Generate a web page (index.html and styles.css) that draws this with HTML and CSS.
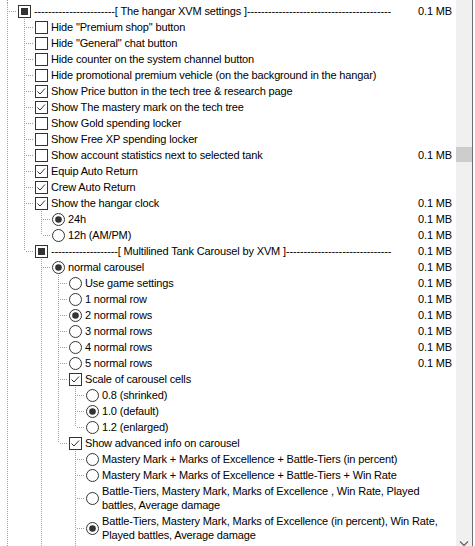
FILE: index.html
```html
<!DOCTYPE html>
<html>
<head>
<meta charset="utf-8">
<link rel="stylesheet" href="styles.css">
</head>
<body>
<div class="window">
  <div class="tree">
    <div class="row stub"><span class="c pipe"></span></div>

    <div class="row"><span class="c tee"></span>
      <svg class="ctl" viewBox="0 0 13 13"><rect x="0.5" y="0.5" width="12" height="12" fill="#fff" stroke="#333"/><rect x="3" y="3" width="7" height="7" fill="#333"/></svg>
      <span class="label">-----------------------[ The hangar XVM settings ]-----------------------------------------</span><span class="size">0.1 MB</span></div>

    <div class="row"><span class="c pipe"></span><span class="c tee"></span>
      <svg class="ctl" viewBox="0 0 13 13"><rect x="0.5" y="0.5" width="12" height="12" fill="#fff" stroke="#333"/></svg>
      <span class="label">Hide "Premium shop" button</span></div>
    <div class="row"><span class="c pipe"></span><span class="c tee"></span>
      <svg class="ctl" viewBox="0 0 13 13"><rect x="0.5" y="0.5" width="12" height="12" fill="#fff" stroke="#333"/></svg>
      <span class="label">Hide "General" chat button</span></div>
    <div class="row"><span class="c pipe"></span><span class="c tee"></span>
      <svg class="ctl" viewBox="0 0 13 13"><rect x="0.5" y="0.5" width="12" height="12" fill="#fff" stroke="#333"/></svg>
      <span class="label">Hide counter on the system channel button</span></div>
    <div class="row"><span class="c pipe"></span><span class="c tee"></span>
      <svg class="ctl" viewBox="0 0 13 13"><rect x="0.5" y="0.5" width="12" height="12" fill="#fff" stroke="#333"/></svg>
      <span class="label">Hide promotional premium vehicle (on the background in the hangar)</span></div>
    <div class="row"><span class="c pipe"></span><span class="c tee"></span>
      <svg class="ctl" viewBox="0 0 13 13"><rect x="0.5" y="0.5" width="12" height="12" fill="#fff" stroke="#333"/><path d="M2.5 6.5 L5 9 L10 3.5" fill="none" stroke="#333"/></svg>
      <span class="label">Show Price button in the tech tree &amp; research page</span></div>
    <div class="row"><span class="c pipe"></span><span class="c tee"></span>
      <svg class="ctl" viewBox="0 0 13 13"><rect x="0.5" y="0.5" width="12" height="12" fill="#fff" stroke="#333"/><path d="M2.5 6.5 L5 9 L10 3.5" fill="none" stroke="#333"/></svg>
      <span class="label">Show The mastery mark on the tech tree</span></div>
    <div class="row"><span class="c pipe"></span><span class="c tee"></span>
      <svg class="ctl" viewBox="0 0 13 13"><rect x="0.5" y="0.5" width="12" height="12" fill="#fff" stroke="#333"/></svg>
      <span class="label">Show Gold spending locker</span></div>
    <div class="row"><span class="c pipe"></span><span class="c tee"></span>
      <svg class="ctl" viewBox="0 0 13 13"><rect x="0.5" y="0.5" width="12" height="12" fill="#fff" stroke="#333"/></svg>
      <span class="label">Show Free XP spending locker</span></div>
    <div class="row"><span class="c pipe"></span><span class="c tee"></span>
      <svg class="ctl" viewBox="0 0 13 13"><rect x="0.5" y="0.5" width="12" height="12" fill="#fff" stroke="#333"/></svg>
      <span class="label">Show account statistics next to selected tank</span><span class="size">0.1 MB</span></div>
    <div class="row"><span class="c pipe"></span><span class="c tee"></span>
      <svg class="ctl" viewBox="0 0 13 13"><rect x="0.5" y="0.5" width="12" height="12" fill="#fff" stroke="#333"/><path d="M2.5 6.5 L5 9 L10 3.5" fill="none" stroke="#333"/></svg>
      <span class="label">Equip Auto Return</span></div>
    <div class="row"><span class="c pipe"></span><span class="c tee"></span>
      <svg class="ctl" viewBox="0 0 13 13"><rect x="0.5" y="0.5" width="12" height="12" fill="#fff" stroke="#333"/><path d="M2.5 6.5 L5 9 L10 3.5" fill="none" stroke="#333"/></svg>
      <span class="label">Crew Auto Return</span></div>
    <div class="row"><span class="c pipe"></span><span class="c tee"></span>
      <svg class="ctl" viewBox="0 0 13 13"><rect x="0.5" y="0.5" width="12" height="12" fill="#fff" stroke="#333"/><path d="M2.5 6.5 L5 9 L10 3.5" fill="none" stroke="#333"/></svg>
      <span class="label">Show the hangar clock</span><span class="size">0.1 MB</span></div>
    <div class="row"><span class="c pipe"></span><span class="c pipe"></span><span class="c tee"></span>
      <svg class="ctl" viewBox="0 0 13 13"><circle cx="6.5" cy="6.5" r="6" fill="#fff" stroke="#333"/><circle cx="6.5" cy="6.5" r="3.3" fill="#333"/></svg>
      <span class="label">24h</span><span class="size">0.1 MB</span></div>
    <div class="row"><span class="c pipe"></span><span class="c pipe"></span><span class="c ell"></span>
      <svg class="ctl" viewBox="0 0 13 13"><circle cx="6.5" cy="6.5" r="6" fill="#fff" stroke="#333"/></svg>
      <span class="label">12h (AM/PM)</span><span class="size">0.1 MB</span></div>

    <div class="row"><span class="c pipe"></span><span class="c ell"></span>
      <svg class="ctl" viewBox="0 0 13 13"><rect x="0.5" y="0.5" width="12" height="12" fill="#fff" stroke="#333"/><rect x="3" y="3" width="7" height="7" fill="#333"/></svg>
      <span class="label">-------------------[ Multilined Tank Carousel by XVM ]------------------------------</span><span class="size">0.1 MB</span></div>

    <div class="row"><span class="c pipe"></span><span class="c"></span><span class="c tee"></span>
      <svg class="ctl" viewBox="0 0 13 13"><circle cx="6.5" cy="6.5" r="6" fill="#fff" stroke="#333"/><circle cx="6.5" cy="6.5" r="3.3" fill="#333"/></svg>
      <span class="label">normal carousel</span><span class="size">0.1 MB</span></div>

    <div class="row"><span class="c pipe"></span><span class="c"></span><span class="c pipe"></span><span class="c tee"></span>
      <svg class="ctl" viewBox="0 0 13 13"><circle cx="6.5" cy="6.5" r="6" fill="#fff" stroke="#333"/></svg>
      <span class="label">Use game settings</span><span class="size">0.1 MB</span></div>
    <div class="row"><span class="c pipe"></span><span class="c"></span><span class="c pipe"></span><span class="c tee"></span>
      <svg class="ctl" viewBox="0 0 13 13"><circle cx="6.5" cy="6.5" r="6" fill="#fff" stroke="#333"/></svg>
      <span class="label">1 normal row</span><span class="size">0.1 MB</span></div>
    <div class="row"><span class="c pipe"></span><span class="c"></span><span class="c pipe"></span><span class="c tee"></span>
      <svg class="ctl" viewBox="0 0 13 13"><circle cx="6.5" cy="6.5" r="6" fill="#fff" stroke="#333"/><circle cx="6.5" cy="6.5" r="3.3" fill="#333"/></svg>
      <span class="label">2 normal rows</span><span class="size">0.1 MB</span></div>
    <div class="row"><span class="c pipe"></span><span class="c"></span><span class="c pipe"></span><span class="c tee"></span>
      <svg class="ctl" viewBox="0 0 13 13"><circle cx="6.5" cy="6.5" r="6" fill="#fff" stroke="#333"/></svg>
      <span class="label">3 normal rows</span><span class="size">0.1 MB</span></div>
    <div class="row"><span class="c pipe"></span><span class="c"></span><span class="c pipe"></span><span class="c tee"></span>
      <svg class="ctl" viewBox="0 0 13 13"><circle cx="6.5" cy="6.5" r="6" fill="#fff" stroke="#333"/></svg>
      <span class="label">4 normal rows</span><span class="size">0.1 MB</span></div>
    <div class="row"><span class="c pipe"></span><span class="c"></span><span class="c pipe"></span><span class="c tee"></span>
      <svg class="ctl" viewBox="0 0 13 13"><circle cx="6.5" cy="6.5" r="6" fill="#fff" stroke="#333"/></svg>
      <span class="label">5 normal rows</span><span class="size">0.1 MB</span></div>
    <div class="row"><span class="c pipe"></span><span class="c"></span><span class="c pipe"></span><span class="c tee"></span>
      <svg class="ctl" viewBox="0 0 13 13"><rect x="0.5" y="0.5" width="12" height="12" fill="#fff" stroke="#333"/><path d="M2.5 6.5 L5 9 L10 3.5" fill="none" stroke="#333"/></svg>
      <span class="label">Scale of carousel cells</span></div>
    <div class="row"><span class="c pipe"></span><span class="c"></span><span class="c pipe"></span><span class="c pipe"></span><span class="c tee"></span>
      <svg class="ctl" viewBox="0 0 13 13"><circle cx="6.5" cy="6.5" r="6" fill="#fff" stroke="#333"/></svg>
      <span class="label">0.8 (shrinked)</span></div>
    <div class="row"><span class="c pipe"></span><span class="c"></span><span class="c pipe"></span><span class="c pipe"></span><span class="c tee"></span>
      <svg class="ctl" viewBox="0 0 13 13"><circle cx="6.5" cy="6.5" r="6" fill="#fff" stroke="#333"/><circle cx="6.5" cy="6.5" r="3.3" fill="#333"/></svg>
      <span class="label">1.0 (default)</span></div>
    <div class="row"><span class="c pipe"></span><span class="c"></span><span class="c pipe"></span><span class="c pipe"></span><span class="c ell"></span>
      <svg class="ctl" viewBox="0 0 13 13"><circle cx="6.5" cy="6.5" r="6" fill="#fff" stroke="#333"/></svg>
      <span class="label">1.2 (enlarged)</span></div>
    <div class="row"><span class="c pipe"></span><span class="c"></span><span class="c pipe"></span><span class="c ell"></span>
      <svg class="ctl" viewBox="0 0 13 13"><rect x="0.5" y="0.5" width="12" height="12" fill="#fff" stroke="#333"/><path d="M2.5 6.5 L5 9 L10 3.5" fill="none" stroke="#333"/></svg>
      <span class="label">Show advanced info on carousel</span></div>
    <div class="row"><span class="c pipe"></span><span class="c"></span><span class="c pipe"></span><span class="c"></span><span class="c tee"></span>
      <svg class="ctl" viewBox="0 0 13 13"><circle cx="6.5" cy="6.5" r="6" fill="#fff" stroke="#333"/></svg>
      <span class="label">Mastery Mark + Marks of Excellence + Battle-Tiers (in percent)</span></div>
    <div class="row"><span class="c pipe"></span><span class="c"></span><span class="c pipe"></span><span class="c"></span><span class="c tee"></span>
      <svg class="ctl" viewBox="0 0 13 13"><circle cx="6.5" cy="6.5" r="6" fill="#fff" stroke="#333"/></svg>
      <span class="label">Mastery Mark + Marks of Excellence + Battle-Tiers + Win Rate</span></div>
    <div class="row tall"><span class="c pipe"></span><span class="c"></span><span class="c pipe"></span><span class="c"></span><span class="c tee"></span>
      <svg class="ctl" viewBox="0 0 13 13"><circle cx="6.5" cy="6.5" r="6" fill="#fff" stroke="#333"/></svg>
      <span class="label">Battle-Tiers, Mastery Mark, Marks of Excellence , Win Rate, Played<br>battles, Average damage</span></div>
    <div class="row tall"><span class="c pipe"></span><span class="c"></span><span class="c pipe"></span><span class="c"></span><span class="c tee"></span>
      <svg class="ctl" viewBox="0 0 13 13"><circle cx="6.5" cy="6.5" r="6" fill="#fff" stroke="#333"/><circle cx="6.5" cy="6.5" r="3.3" fill="#333"/></svg>
      <span class="label">Battle-Tiers, Mastery Mark, Marks of Excellence (in percent), Win Rate,<br>Played battles, Average damage</span></div>
    <div class="row"><span class="c pipe"></span><span class="c"></span><span class="c pipe"></span><span class="c"></span><span class="c pipe"></span></div>
  </div>
  <div class="scrollbar">
    <div class="thumb"></div>
    <div class="track-rest"></div>
    <svg class="arrow" viewBox="0 0 16 5"><path d="M4 0.5 L8 4.5 L12 0.5" fill="none" stroke="#606060" stroke-width="1.2"/></svg>
  </div>
  <div class="edge"></div>
  <div class="margin"></div>
</div>
</body>
</html>
```

FILE: styles.css
```css
* { box-sizing: border-box; }
html, body { margin: 0; padding: 0; background: #fff; overflow: hidden; }
body {
  width: 475px;
  height: 546px;
  font-family: "Liberation Sans", Arial, sans-serif;
  font-size: 11px;
  letter-spacing: -0.15px;
  color: #000;
}
.window { display: flex; height: 546px; }
.tree { flex: 1; min-width: 0; overflow: hidden; }
.row {
  display: flex;
  align-items: stretch;
  min-height: 16px;
  line-height: 16px;
  padding-right: 4px;
  --mid: 8px;
}
.row.stub { min-height: 3px; height: 3px; }
.row.tall { --mid: 15px; padding: 1px 4px 1px 0; }
.row.tall .label { line-height: 14px; }
.c { flex: none; width: 17px; background-repeat: no-repeat; }
.pipe {
  background-image: repeating-linear-gradient(to bottom, #a0a0a0 0 1px, transparent 1px 2px);
  background-size: 1px 100%;
  background-position: 7px 0;
}
.tee, .ell {
  background-image:
    repeating-linear-gradient(to bottom, #a0a0a0 0 1px, transparent 1px 2px),
    repeating-linear-gradient(to right, #a0a0a0 0 1px, transparent 1px 2px);
  background-position: 7px 0, 9px var(--mid);
}
.tee { background-size: 1px 100%, 8px 1px; }
.ell { background-size: 1px var(--mid), 8px 1px; }
.row.tall .c { margin: -1px 0; }
.ctl {
  flex: none;
  width: 13px;
  height: 13px;
  margin: 1px 0 0 1px;
  align-self: center;
  display: block;
}
.label { flex: 1; min-width: 0; white-space: nowrap; margin-left: 3px; }
.size { flex: none; text-align: right; white-space: nowrap; }
.scrollbar {
  flex: none;
  width: 16px;
  background: #f0f0f0;
  display: flex;
  flex-direction: column;
}
.thumb { height: 15px; margin-top: 147px; background: #cdcdcd; }
.track-rest { flex: 1; }
.arrow { display: block; width: 16px; height: 5px; }
.edge { flex: none; width: 1px; background: #6e6e6e; }
.margin { flex: none; width: 2px; background: #fff; }
```
